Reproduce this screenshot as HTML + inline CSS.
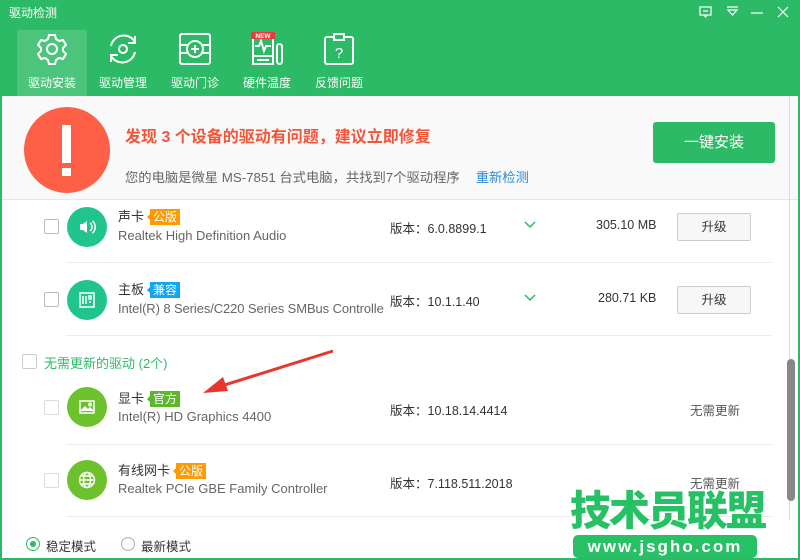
<!DOCTYPE html>
<html><head><meta charset="utf-8"><style>
*{margin:0;padding:0;box-sizing:border-box}
body{width:800px;height:560px;overflow:hidden;background:#fff;font-family:"Liberation Sans","Noto Sans CJK SC",sans-serif;position:relative;color:#333}
.abs{position:absolute}
.hdr{left:0;top:0;width:800px;height:96px;background:#2dba66}
.tab{top:30px;width:70px;height:66px;text-align:center;color:#fff;font-size:12px}
.tab span{position:absolute;left:0;right:0;top:44px}
.tab svg{position:absolute;left:18px;top:2px}
.alert{left:2px;top:96px;width:796px;height:104px;background:#f9f9f9;border-bottom:1px solid #e6e6e6}
.cb{width:15px;height:15px;border:1px solid #bbb;background:#fff;border-radius:2px}
.ic{width:40px;height:40px;border-radius:50%}
.nm{font-size:13px;color:#333}
.tag{display:inline-block;color:#fff;font-size:12px;padding:0 3px;line-height:16px;margin-left:6px;position:relative}
.tag:before{content:"";position:absolute;left:-3px;top:5px;border:3px solid transparent;border-left:0;border-right-color:inherit}
.sub{font-size:13px;color:#666}
.ver{font-size:12.5px;color:#333}
.btn{width:74px;height:28px;border:1px solid #ccc;background:#f7f7f7;border-radius:2px;font-size:12.5px;text-align:center;line-height:26px}
.div{left:66px;width:706px;height:1px;background:#ececec}
</style></head><body>
<div class="abs hdr"></div>
<div class="abs" style="left:9px;top:4px;color:#fff;font-size:12px">驱动检测</div>
<svg class="abs" style="left:697px;top:5px" width="100" height="16" viewBox="0 0 100 16" fill="none" stroke="#fff" stroke-width="1.2">
<rect x="3" y="2" width="11" height="8"/><path d="M7 10l1.5 2 1.5-2M6 6h5"/>
<path d="M30 2h11M31 5h9l-4.5 5z"/>
<path d="M54 8h12"/>
<path d="M81 2l10 10M91 2l-10 10"/>
</svg>
<div class="abs tab" style="left:17px;background:rgba(255,255,255,.15)">
<svg width="34" height="34" viewBox="0 0 34 34" fill="none" stroke="#fff" stroke-width="2"><path d="M14 3h6l1 4 3 2 4-1 3 5-3 3v3l3 3-3 5-4-1-3 2-1 4h-6l-1-4-3-2-4 1-3-5 3-3v-3l-3-3 3-5 4 1 3-2z"/><circle cx="17" cy="17" r="5"/></svg><span>驱动安装</span></div>
<div class="abs tab" style="left:88px">
<svg width="34" height="34" viewBox="0 0 34 34" fill="none" stroke="#fff" stroke-width="2"><path d="M5 14A13 13 0 0 1 29 10M29 20A13 13 0 0 1 5 24"/><path d="M29 4v7h-7M5 30v-7h7"/><circle cx="17" cy="17" r="4"/></svg><span>驱动管理</span></div>
<div class="abs tab" style="left:160px">
<svg width="34" height="34" viewBox="0 0 34 34" fill="none" stroke="#fff" stroke-width="2"><rect x="2" y="2" width="30" height="30" rx="2"/><circle cx="17" cy="17" r="8"/><path d="M17 13v8M13 17h8M2 13h7M2 21h7M25 13h7M25 21h7"/></svg><span>驱动门诊</span></div>
<div class="abs tab" style="left:232px">
<svg width="40" height="34" viewBox="0 0 40 34" fill="none" stroke="#fff" stroke-width="2"><rect x="3" y="2" width="20" height="30"/><path d="M3 24h20M7 28h12M5 14h4l2-5 3 10 2-5h5"/><rect x="27" y="12" width="5" height="20" rx="2.5"/><rect x="1" y="0" width="24" height="7" fill="#e83c3c" stroke="none"/><text x="13" y="6" font-size="6.5" fill="#fff" stroke="none" text-anchor="middle" font-weight="bold" font-family="Liberation Sans">NEW</text></svg><span>硬件温度</span></div>
<div class="abs tab" style="left:304px">
<svg width="34" height="34" viewBox="0 0 34 34" fill="none" stroke="#fff" stroke-width="2"><rect x="3" y="5" width="28" height="27" rx="2"/><rect x="12" y="2" width="10" height="6" fill="#2dba66"/><text x="17" y="26" font-size="15" fill="#fff" stroke="none" text-anchor="middle" font-family="Liberation Sans">?</text></svg><span>反馈问题</span></div>

<div class="abs alert"></div>
<div class="abs" style="left:24px;top:107px;width:86px;height:86px;border-radius:50%;background:#fd5f47"></div>
<div class="abs" style="left:62px;top:125px;width:9px;height:38px;background:#fff"></div>
<div class="abs" style="left:62px;top:168px;width:9px;height:8px;background:#fff"></div>
<div class="abs" style="left:125px;top:123px;font-size:16px;font-weight:bold;color:#f2553a">发现 3 个设备的驱动有问题，建议立即修复</div>
<div class="abs" style="left:125px;top:167px;font-size:13.3px;color:#666;white-space:nowrap">您的电脑是微星 MS-7851 台式电脑，共找到7个驱动程序<span style="color:#2b8ae0;margin-left:16px">重新检测</span></div>
<div class="abs" style="left:653px;top:122px;width:122px;height:41px;background:#2dba66;border-radius:3px;color:#fff;font-size:15px;text-align:center;line-height:41px">一键安装</div>

<div class="abs cb" style="left:44px;top:219px"></div>
<div class="abs ic" style="left:67px;top:207px;background:#22c48d"></div>
<svg class="abs" style="left:78px;top:217px" width="20" height="20" viewBox="0 0 20 20" fill="#fff"><path d="M2 7h3l4-3v12l-4-3H2z"/><path d="M12 6a5 5 0 0 1 0 8M14.5 4a8 8 0 0 1 0 12" fill="none" stroke="#fff" stroke-width="1.5"/></svg>
<div class="abs nm" style="left:118px;top:206px">声卡<span class="tag" style="background:#ff9900;border-color:#ff9900">公版</span></div>
<div class="abs sub" style="left:118px;top:228px">Realtek High Definition Audio</div>
<div class="abs ver" style="left:390px;top:218px">版本：6.0.8899.1</div>
<svg class="abs" style="left:524px;top:221px" width="12" height="8" fill="none" stroke="#2dba66" stroke-width="1.5"><path d="M1 1l5 5 5-5"/></svg>
<div class="abs ver" style="left:596px;top:218px">305.10 MB</div>
<div class="abs btn" style="left:677px;top:213px">升级</div>
<div class="abs div" style="top:262px"></div>

<div class="abs cb" style="left:44px;top:292px"></div>
<div class="abs ic" style="left:67px;top:280px;background:#22c48d"></div>
<svg class="abs" style="left:79px;top:292px" width="16" height="16" viewBox="0 0 16 16" fill="none" stroke="#fff" stroke-width="1.5"><rect x="1" y="1" width="14" height="14"/><path d="M4 4v8M7 4v8M10 4h2v3h-2zM10 10h2"/></svg>
<div class="abs nm" style="left:118px;top:279px">主板<span class="tag" style="background:#0ea6f5;border-color:#0ea6f5">兼容</span></div>
<div class="abs sub" style="left:118px;top:301px;letter-spacing:-0.1px">Intel(R) 8 Series/C220 Series SMBus Controlle</div>
<div class="abs ver" style="left:390px;top:291px">版本：10.1.1.40</div>
<svg class="abs" style="left:524px;top:294px" width="12" height="8" fill="none" stroke="#2dba66" stroke-width="1.5"><path d="M1 1l5 5 5-5"/></svg>
<div class="abs ver" style="left:598px;top:291px">280.71 KB</div>
<div class="abs btn" style="left:677px;top:286px">升级</div>
<div class="abs div" style="top:335px"></div>

<div class="abs cb" style="left:22px;top:354px;border-color:#ccc"></div>
<div class="abs" style="left:44px;top:353px;font-size:13px;color:#2dba66">无需更新的驱动 (2个)</div>

<div class="abs cb" style="left:44px;top:400px;border-color:#ddd"></div>
<div class="abs ic" style="left:67px;top:387px;background:#6cc12c"></div>
<svg class="abs" style="left:79px;top:400px" width="16" height="14" viewBox="0 0 16 14" fill="none" stroke="#fff" stroke-width="1.5"><rect x="1" y="1" width="14" height="12"/><path d="M2 11l4-4 3 3 2-2 3 3" fill="#fff"/><circle cx="11" cy="4.5" r="1.2" fill="#fff"/></svg>
<div class="abs nm" style="left:118px;top:388px">显卡<span class="tag" style="background:#5cb82a;border-color:#5cb82a">官方</span></div>
<div class="abs sub" style="left:118px;top:409px">Intel(R) HD Graphics 4400</div>
<div class="abs ver" style="left:390px;top:400px">版本：10.18.14.4414</div>
<div class="abs ver" style="left:690px;top:400px;color:#555">无需更新</div>
<div class="abs div" style="top:444px"></div>

<div class="abs cb" style="left:44px;top:473px;border-color:#ddd"></div>
<div class="abs ic" style="left:67px;top:460px;background:#6cc12c"></div>
<svg class="abs" style="left:78px;top:471px" width="18" height="18" viewBox="0 0 18 18" fill="none" stroke="#fff" stroke-width="1.4"><circle cx="9" cy="9" r="7.5"/><ellipse cx="9" cy="9" rx="3.5" ry="7.5"/><path d="M1.5 9h15M3 5h12M3 13h12"/></svg>
<div class="abs nm" style="left:118px;top:460px">有线网卡<span class="tag" style="background:#ff9900;border-color:#ff9900">公版</span></div>
<div class="abs sub" style="left:118px;top:481px">Realtek PCIe GBE Family Controller</div>
<div class="abs ver" style="left:390px;top:473px">版本：7.118.511.2018</div>
<div class="abs ver" style="left:690px;top:473px;color:#555">无需更新</div>
<div class="abs div" style="top:516px"></div>

<svg class="abs" style="left:195px;top:345px" width="145" height="55"><path d="M138 6L20 43" stroke="#e8362c" stroke-width="3"/><path d="M8 48l20-16 5 14z" fill="#e8362c"/></svg>

<div class="abs" style="left:26px;top:537px;width:14px;height:14px;border-radius:50%;border:1px solid #2dba66"></div>
<div class="abs" style="left:30px;top:541px;width:6px;height:6px;border-radius:50%;background:#2dba66"></div>
<div class="abs" style="left:46px;top:536px;font-size:12.5px">稳定模式</div>
<div class="abs" style="left:121px;top:537px;width:14px;height:14px;border-radius:50%;border:1px solid #aaa"></div>
<div class="abs" style="left:141px;top:536px;font-size:12.5px">最新模式</div>

<div class="abs" style="left:789px;top:96px;width:1px;height:424px;background:#ddd"></div>
<div class="abs" style="left:787px;top:359px;width:8px;height:142px;border-radius:4px;background:#888"></div>

<div class="abs" style="left:570px;top:488px;font-size:41px;font-weight:900;color:#27c065;letter-spacing:-2px;line-height:46px">技术员联盟</div>
<div class="abs" style="left:573px;top:535px;width:184px;height:23px;border-radius:5px;background:#27c065;color:#fff;font-size:17px;font-weight:bold;text-align:center;line-height:23px;letter-spacing:2px">www.jsgho.com</div>

<div class="abs" style="left:0;top:0;width:800px;height:560px;border:2px solid #2dba66;border-top:none;pointer-events:none"></div>
</body></html>
